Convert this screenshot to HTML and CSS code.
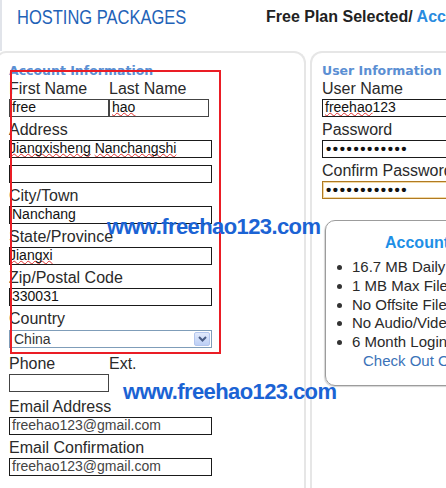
FILE: index.html
```html
<!DOCTYPE html>
<html lang="en">
<head>
<meta charset="utf-8">
<title>Hosting Packages</title>
<link rel="stylesheet" href="styles.css">
</head>
<body>
<div class="page">
  <header class="top">
    <div class="brand">HOSTING PACKAGES</div>
    <div class="plan">Free Plan Selected/ <span class="step">Account Setup</span></div>
  </header>

  <main class="panels">
    <section class="panel panel-left">
      <div class="legend">Account Information</div>

      <div class="pair">
        <div class="col">
          <div class="lbl">First Name</div>
          <div class="inp inp-half inp-soft">free</div>
        </div>
        <div class="col">
          <div class="lbl">Last Name</div>
          <div class="inp inp-half inp-soft"><span class="sp">hao</span></div>
        </div>
      </div>

      <div class="lbl">Address</div>
      <div class="inp inp-wide gap-7"><span class="sp scrolled">Jiangxisheng</span> <span class="sp">Nanchangshi</span></div>
      <div class="inp inp-wide"></div>

      <div class="lbl">City/Town</div>
      <div class="inp inp-wide">Nanchang</div>

      <div class="lbl">State/Province</div>
      <div class="inp inp-wide"><span class="sp scrolled">Jiangxi</span></div>

      <div class="lbl">Zip/Postal Code</div>
      <div class="inp inp-wide">330031</div>

      <div class="lbl">Country</div>
      <div class="sel">
        <span>China</span>
        <span class="sel-btn">
          <svg width="9" height="6" viewBox="0 0 9 6"><path d="M1 1 L4.5 4.5 L8 1" fill="none" stroke="#4a5d86" stroke-width="2"/></svg>
        </span>
      </div>

      <div class="pair">
        <div class="col"><div class="lbl">Phone</div></div>
        <div class="col"><div class="lbl">Ext.</div></div>
      </div>
      <div class="inp inp-half inp-soft gap-4"></div>

      <div class="lbl">Email Address</div>
      <div class="inp inp-wide muted">freehao123@gmail.com</div>

      <div class="lbl">Email Confirmation</div>
      <div class="inp inp-wide muted">freehao123@gmail.com</div>
    </section>

    <section class="panel panel-right">
      <div class="legend">User Information</div>

      <div class="lbl">User Name</div>
      <div class="inp inp-right"><span class="sp">freehao</span>123</div>

      <div class="lbl">Password</div>
      <div class="inp inp-right dots">••••••••••••</div>

      <div class="lbl">Confirm Password</div>
      <div class="inp inp-right dots focus">••••••••••••</div>

      <div class="acct">
        <div class="acct-title">Account Features</div>
        <ul class="acct-list">
          <li>16.7 MB Daily Transfer</li>
          <li>1 MB Max File Size</li>
          <li>No Offsite File Linking</li>
          <li>No Audio/Video Files</li>
          <li>6 Month Login Required</li>
        </ul>
        <div class="acct-link">Check Out Our Paid Plans</div>
      </div>
    </section>
  </main>

  <div class="redbox"></div>
  <div class="mark mark-1">www.freehao123.com</div>
  <div class="mark mark-2">www.freehao123.com</div>
</div>
</body>
</html>
```

FILE: styles.css
```css
html, body {
  margin: 0;
  padding: 0;
  background: #fff;
}

body {
  font-family: "Liberation Sans", Arial, sans-serif;
  overflow: hidden;
}

.page {
  position: relative;
  width: 446px;
  height: 488px;
  overflow: hidden;
}

/* header */
.top {
  display: grid;
  grid-template-columns: 249px max-content;
  height: 51px;
  box-sizing: border-box;
  padding: 5px 0 0 15px;
  border-left: 2px solid #e1e4ea;
  line-height: 24px;
  white-space: nowrap;
}

.brand {
  font-size: 20px;
  color: #1f63b8;
  transform: scaleX(0.825);
  transform-origin: left center;
}

.plan {
  font-size: 16px;
  font-weight: bold;
  color: #222;
}

.step {
  color: #2a8ce0;
}

/* panels */
.panels {
  display: flex;
  gap: 4px;
  margin-left: -4px;
  height: 437px;
}

.panel {
  flex: none;
  box-sizing: border-box;
  border: 2px solid #e6e6e6;
  border-bottom: none;
}

.panel-left {
  width: 310px;
  border-radius: 10px 12px 0 0;
  padding: 11px 0 0 11px;
}

.panel-right {
  width: 240px;
  border-radius: 12px 0 0 0;
  padding: 11px 0 0 10px;
  white-space: nowrap;
}

.legend {
  font-family: "DejaVu Sans", Verdana, sans-serif;
  font-weight: bold;
  font-size: 12.5px;
  line-height: 14px;
  color: #5b8fd3;
}

.lbl {
  font-size: 16px;
  line-height: 21px;
  color: #2a2a2a;
  white-space: nowrap;
}

.pair {
  display: flex;
}

.col {
  width: 100px;
}

.inp {
  box-sizing: border-box;
  height: 18px;
  margin-bottom: 2px;
  border: 1px solid #1a1a1a;
  padding: 0 2px;
  font-size: 14px;
  line-height: 14px;
  color: #111;
  white-space: nowrap;
  overflow: hidden;
}

.inp-wide { width: 203px; }
.inp-half { width: 100px; }
.inp-right { width: 160px; }
.inp-soft { border-color: #444; }

.gap-7 { margin-bottom: 7px; }
.gap-4 { margin-bottom: 4px; }

.scrolled {
  margin-left: -3px;
}

.muted {
  color: #444;
}

.sp {
  text-decoration: underline wavy #e0302e;
  text-decoration-thickness: 1px;
  text-underline-offset: 0;
  text-decoration-skip-ink: none;
}

.dots {
  font-size: 15px;
  font-weight: bold;
  letter-spacing: 1.6px;
  padding-left: 3px;
  line-height: 16px;
}

.focus {
  border-color: #b07a22;
  box-shadow: inset 0 0 0 1px #f2d9a6;
}

/* select */
.sel {
  box-sizing: border-box;
  width: 203px;
  height: 18px;
  margin: 1px 0 5px;
  border: 1px solid #7f9db9;
  display: flex;
  align-items: center;
  justify-content: space-between;
  padding: 0 1px 0 4px;
  font-size: 14px;
  color: #333;
}

.sel-btn {
  box-sizing: border-box;
  width: 16px;
  height: 14px;
  border: 1px solid #b3c6ee;
  border-radius: 2px;
  background: linear-gradient(#e2eafc, #bccff5);
  display: flex;
  align-items: center;
  justify-content: center;
}

/* account box */
.acct {
  box-sizing: border-box;
  width: 220px;
  height: 166px;
  margin: 21px 0 0 3px;
  border: 1px solid #9c9c9c;
  border-radius: 10px;
  box-shadow: -1px 1px 1px #d4d4d4;
  padding: 12px 0 0 0;
}

.acct-title {
  font-size: 16px;
  font-weight: bold;
  line-height: 20px;
  color: #1e8fe6;
  padding-left: 59px;
  margin-bottom: 5px;
}

.acct-list {
  list-style: none;
  margin: 0;
  padding: 0 0 0 26px;
}

.acct-list li {
  position: relative;
  font-size: 15px;
  line-height: 18.75px;
  color: #2a2a2a;
}

.acct-list li::before {
  content: "";
  position: absolute;
  left: -15px;
  top: 7px;
  width: 5px;
  height: 5px;
  border-radius: 50%;
  background: #333;
}

.acct-link {
  font-size: 15px;
  line-height: 18.75px;
  color: #3a72b8;
  padding-left: 37px;
}

/* overlays */
.redbox {
  position: absolute;
  left: 10px;
  top: 70px;
  width: 211px;
  height: 284px;
  box-sizing: border-box;
  border: 2px solid #ea1d25;
}

.mark {
  position: absolute;
  font-size: 22px;
  font-weight: bold;
  line-height: 22px;
  letter-spacing: -0.6px;
  color: #1b63d4;
  white-space: nowrap;
}

.mark-1 {
  left: 107px;
  top: 216px;
}

.mark-2 {
  left: 123px;
  top: 381px;
}
```
